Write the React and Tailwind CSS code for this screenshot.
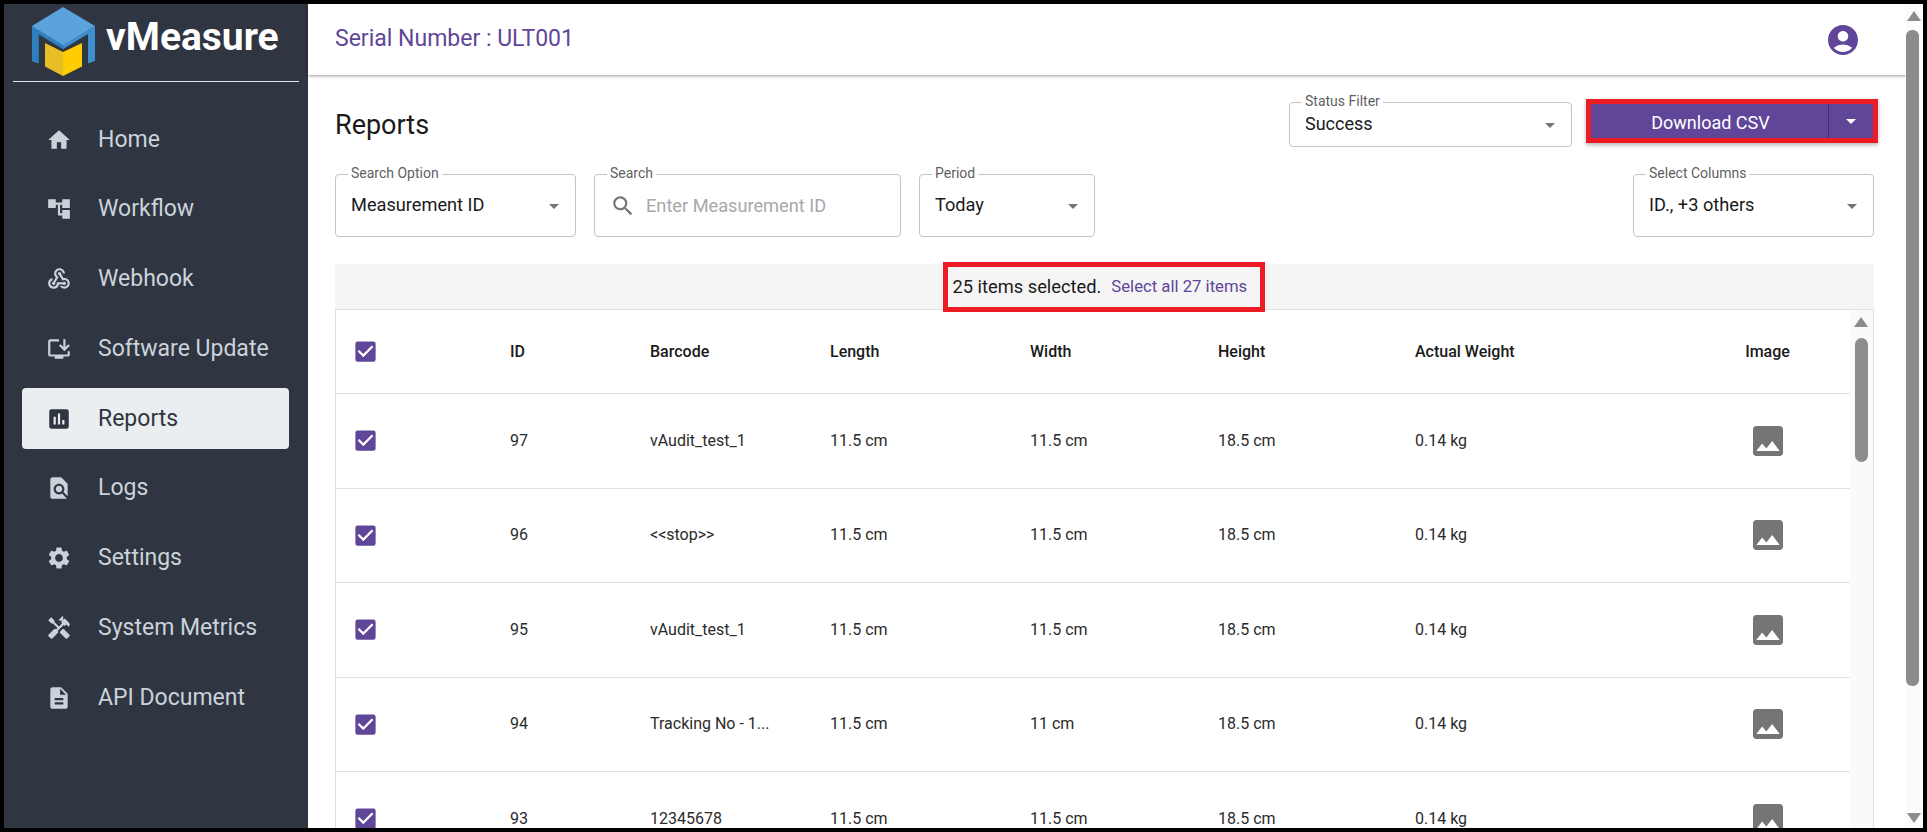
import React from "react";
import {
  MdHome, MdAccountTree, MdWebhook, MdInstallDesktop, MdAssessment, MdFindInPage,
  MdSettings, MdHandyman, MdDescription, MdAccountCircle, MdSearch, MdImage,
  MdCheckBox, MdArrowDropDown,
} from "react-icons/md";

const NAV = [
  ["Home", MdHome], ["Workflow", MdAccountTree], ["Webhook", MdWebhook],
  ["Software Update", MdInstallDesktop], ["Reports", MdAssessment], ["Logs", MdFindInPage],
  ["Settings", MdSettings], ["System Metrics", MdHandyman], ["API Document", MdDescription],
];

const ROWS = [
  ["97", "vAudit_test_1", "11.5 cm", "11.5 cm", "18.5 cm", "0.14 kg"],
  ["96", "<<stop>>", "11.5 cm", "11.5 cm", "18.5 cm", "0.14 kg"],
  ["95", "vAudit_test_1", "11.5 cm", "11.5 cm", "18.5 cm", "0.14 kg"],
  ["94", "Tracking No - 1...", "11.5 cm", "11 cm", "18.5 cm", "0.14 kg"],
  ["93", "12345678", "11.5 cm", "11.5 cm", "18.5 cm", "0.14 kg"],
];

const GRID = "grid grid-cols-[174px_140px_180px_200px_188px_197px_272px_161px] items-center";

function Logo() {
  return (
    <svg viewBox="0 0 64 70" className="w-[64px] h-[70px] shrink-0">
      <polygon points="0,19 0,54 6.5,56.5 6.5,27 31,42 56,27 56,56.5 63,54 63,19 31.5,37" fill="#3d8fcf" />
      <polygon points="0,19 0,54 6.5,56.5 6.5,27 31.5,42 31.5,37" fill="#2f7fbe" />
      <polygon points="0,19 31,0 63,19 31,38" fill="#5ba3dc" />
      <polygon points="13,36 31,45 31,69 13,59.5" fill="#e9bd26" />
      <polygon points="31,45 50,36 50,59.5 31,69" fill="#ffcc00" />
    </svg>
  );
}

function Field({ label, className, children }) {
  return (
    <div className={`relative border border-[#c4c4c4] rounded-[4px] flex items-center ${className}`}>
      <span className="absolute left-[12px] -top-[10px] bg-white px-[3px] text-[14px] leading-[16px] text-[#5f5f5f]">{label}</span>
      {children}
    </div>
  );
}

function Caret() {
  return <MdArrowDropDown className="text-[#757575] shrink-0" size={24} />;
}

export default function App() {
  return (
    <div className="h-screen w-full overflow-hidden border-4 border-black bg-white flex font-['Roboto',sans-serif]">
      <aside className="w-[304px] shrink-0 bg-[#2f3541] flex flex-col">
        <div className="mx-[9px] h-[78px] border-b border-[#dfe3e6] flex items-start pl-[19px] pt-[3px] gap-[10px]">
          <Logo />
          <span className="text-[39px] font-bold text-white leading-[60px]">vMeasure</span>
        </div>
        <nav className="flex flex-col mt-[27px] ml-[18px] mr-[19px] gap-[8.8px]">
          {NAV.map(([name, Icon]) => {
            const active = name === "Reports";
            return (
              <div key={name} className={`h-[61px] flex items-center pl-[24px] gap-[26px] rounded-[4px] ${active ? "bg-[#ebeef0] text-[#2f3541]" : "text-[#cbd3da]"}`}>
                <Icon size={26} className="shrink-0" />
                <span className="text-[23px] leading-[30px]">{name}</span>
              </div>
            );
          })}
        </nav>
      </aside>

      <main className="flex-1 min-w-0 flex flex-col relative">
        <header className="h-[71px] shrink-0 flex items-center justify-between pl-[27px] pr-[45px] shadow-[0_1px_3px_rgba(0,0,0,0.4)] mr-[17px]">
          <span className="text-[23px] text-[#5f4699]">Serial Number : ULT001</span>
          <MdAccountCircle size={36} className="text-[#5f4699]" />
        </header>

        <div className="pl-[27px] pr-[49px] flex-1 min-h-0 flex flex-col">
          <div className="flex items-center justify-between mt-[24px] h-[49px]">
            <h1 className="text-[27px] font-normal text-[#1a1a1a] mt-[3px]">Reports</h1>
            <div className="flex items-start gap-[14px] -mr-[4px] h-full">
              <Field label="Status Filter" className="w-[283px] h-[45px] mt-[3px] pl-[15px] pr-[9px] justify-between">
                <span className="text-[18px] text-[#1a1a1a] -mt-[2px]">Success</span>
                <Caret />
              </Field>
              <div className="w-[292px] h-[44px] border-[5px] border-[#ed1c24] bg-[#5f4699] flex text-white shadow-[0_2px_4px_rgba(0,0,0,0.3)]">
                <span className="flex-1 flex items-center justify-center pt-[2px] pl-[2px] text-[18px] font-normal border-r border-[#43306f]">Download CSV</span>
                <span className="w-[44px] flex items-center justify-center"><MdArrowDropDown size={24} /></span>
              </div>
            </div>
          </div>

          <div className="flex items-stretch mt-[26px] gap-[18px] h-[63px] shrink-0">
            <Field label="Search Option" className="w-[241px] pl-[15px] pr-[9px] justify-between">
              <span className="text-[18.2px] text-[#1a1a1a] -mt-[2px]">Measurement ID</span>
              <Caret />
            </Field>
            <Field label="Search" className="w-[307px] pl-[15px]">
              <MdSearch size={26} className="text-[#757575] shrink-0" />
              <span className="text-[18.2px] text-[#a8a8a8] ml-[10px]">Enter Measurement ID</span>
            </Field>
            <Field label="Period" className="w-[176px] pl-[15px] pr-[9px] justify-between">
              <span className="text-[18.2px] text-[#1a1a1a] -mt-[2px]">Today</span>
              <Caret />
            </Field>
            <Field label="Select Columns" className="w-[241px] ml-auto pl-[15px] pr-[9px] justify-between">
              <span className="text-[18.2px] text-[#1a1a1a] -mt-[2px]">ID., +3 others</span>
              <Caret />
            </Field>
          </div>

          <div className="mt-[27px] h-[46px] shrink-0 bg-[#f5f5f5] border-b border-[#e0e0e0] flex items-center justify-center">
            <div className="w-[322px] h-[50px] shrink-0 -ml-[2px] pl-[5px] border-[5px] border-[#ed1c24] flex items-center justify-start gap-[10px]">
              <span className="text-[18.3px] text-[#1a1a1a] whitespace-nowrap">25 items selected.</span>
              <span className="text-[16.7px] text-[#5f4699] whitespace-nowrap">Select all 27 items</span>
            </div>
          </div>

          <div className="flex-1 min-h-0 border-x border-[#e0e0e0] relative overflow-hidden">
            <div className={`${GRID} h-[84px] w-[1514px] border-b border-[#e0e0e0] text-[16px] font-medium text-[#1a1a1a]`}>
              <div className="pl-[16px]"><MdCheckBox size={27} className="text-[#5f4699]" /></div>
              <span>ID</span><span>Barcode</span><span>Length</span><span>Width</span><span>Height</span><span>Actual Weight</span>
              <span className="text-center">Image</span>
            </div>
            {ROWS.map((r) => (
              <div key={r[0]} className={`${GRID} h-[94.5px] w-[1514px] border-b border-[#e0e0e0] text-[16px] text-[#2b2b2b]`}>
                <div className="pl-[16px]"><MdCheckBox size={27} className="text-[#5f4699]" /></div>
                <span>{r[0]}</span><span>{r[1]}</span><span>{r[2]}</span><span>{r[3]}</span><span>{r[4]}</span><span>{r[5]}</span>
                <div className="flex justify-center"><MdImage size={40} className="text-[#757575]" /></div>
              </div>
            ))}
            <div className="absolute top-0 right-0 bottom-0 w-[23px] bg-[#fafafa]">
              <div className="absolute top-[7px] left-[4px] w-0 h-0 border-x-[7px] border-x-transparent border-b-[10px] border-b-[#8c8c8c]" />
              <div className="absolute top-[28px] left-[5px] w-[13px] h-[124px] rounded-[7px] bg-[#8c8c8c]" />
            </div>
          </div>
        </div>

        <div className="absolute top-0 right-0 bottom-0 w-[17px] bg-[#fbfbfb]">
          <div className="absolute top-[7px] left-[1px] w-0 h-0 border-x-[7px] border-x-transparent border-b-[10px] border-b-[#8c8c8c]" />
          <div className="absolute top-[26px] left-[0px] w-[13px] h-[656px] rounded-[6px] bg-[#8c8c8c]" />
          <div className="absolute bottom-[5px] left-[1px] w-0 h-0 border-x-[7px] border-x-transparent border-t-[10px] border-t-[#8c8c8c]" />
        </div>
      </main>
    </div>
  );
}
